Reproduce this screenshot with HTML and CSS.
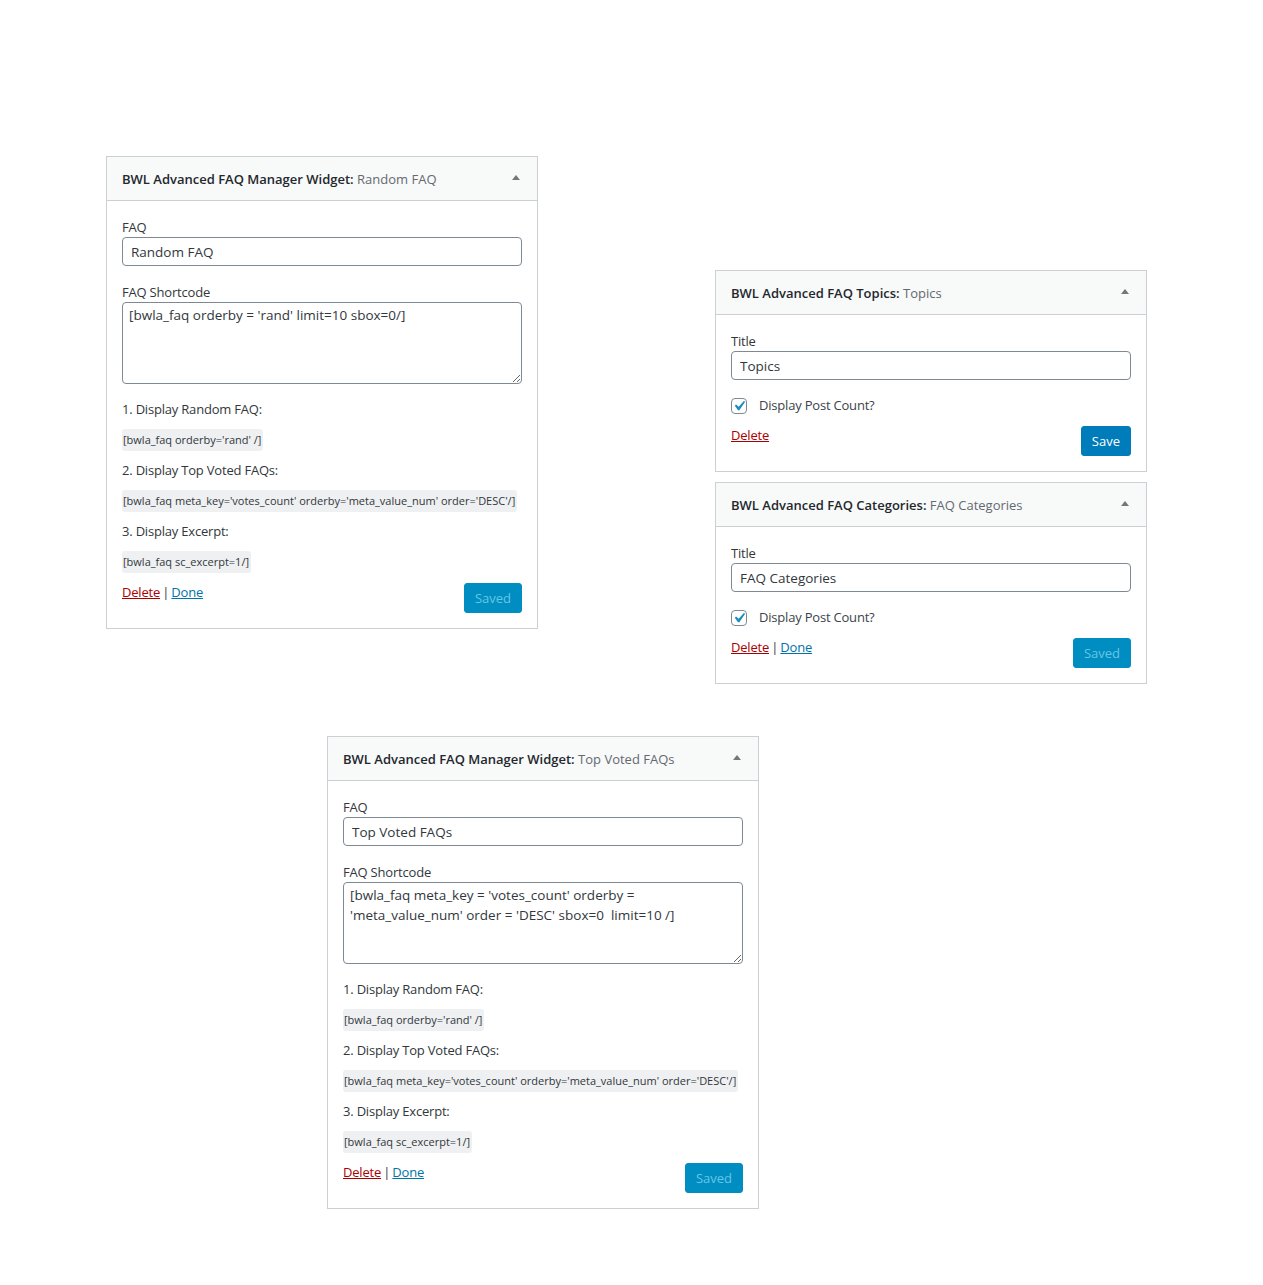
FILE: index.html
```html
<!DOCTYPE html>
<html lang="en">
<head>
  <meta charset="UTF-8">
  <meta name="viewport" content="width=device-width, initial-scale=1.0">
  <title>BWL Advanced FAQ Widgets</title>
  <link rel="stylesheet" href="styles.css">
</head>
<body>
  <main class="canvas">
    <div class="row-top">
      <section class="widget widget-random">
        <div class="widget-top">
          <h3>BWL Advanced FAQ Manager Widget:<span class="in-title"> Random FAQ</span></h3>
          <span class="toggle"></span>
        </div>
        <div class="widget-inside">
          <div class="field">
            <label>FAQ</label>
            <input type="text" class="widefat" value="Random FAQ">
          </div>
          <div class="field">
            <label>FAQ Shortcode</label>
            <textarea class="widefat">[bwla_faq orderby = 'rand' limit=10 sbox=0/]</textarea>
          </div>
          <div class="help">
            <p>1. Display Random FAQ:</p>
            <code>[bwla_faq orderby='rand' /]</code>
            <p>2. Display Top Voted FAQs:</p>
            <code>[bwla_faq meta_key='votes_count' orderby='meta_value_num' order='DESC'/]</code>
            <p>3. Display Excerpt:</p>
            <code>[bwla_faq sc_excerpt=1/]</code>
          </div>
          <div class="actions">
            <div class="links"><a href="#" class="delete">Delete</a> | <a href="#" class="done">Done</a></div>
            <button class="button saved">Saved</button>
          </div>
        </div>
      </section>

      <div class="side">
        <section class="widget">
          <div class="widget-top">
            <h3>BWL Advanced FAQ Topics:<span class="in-title"> Topics</span></h3>
            <span class="toggle"></span>
          </div>
          <div class="widget-inside">
            <div class="field">
              <label>Title</label>
              <input type="text" class="widefat" value="Topics">
            </div>
            <label class="check">
              <span class="box"><svg viewBox="0 0 20 20" width="20" height="20"><path d="M14.83 4.89l1.34.94-5.81 8.38H9.02L5.78 9.67l1.34-1.25 2.57 2.4z" fill="#1e8cbe"/></svg></span>
              <span>Display Post Count?</span>
            </label>
            <div class="actions">
              <div class="links"><a href="#" class="delete">Delete</a></div>
              <button class="button primary">Save</button>
            </div>
          </div>
        </section>

        <section class="widget">
          <div class="widget-top">
            <h3>BWL Advanced FAQ Categories:<span class="in-title"> FAQ Categories</span></h3>
            <span class="toggle"></span>
          </div>
          <div class="widget-inside">
            <div class="field">
              <label>Title</label>
              <input type="text" class="widefat" value="FAQ Categories">
            </div>
            <label class="check">
              <span class="box"><svg viewBox="0 0 20 20" width="20" height="20"><path d="M14.83 4.89l1.34.94-5.81 8.38H9.02L5.78 9.67l1.34-1.25 2.57 2.4z" fill="#1e8cbe"/></svg></span>
              <span>Display Post Count?</span>
            </label>
            <div class="actions">
              <div class="links"><a href="#" class="delete">Delete</a> | <a href="#" class="done">Done</a></div>
              <button class="button saved">Saved</button>
            </div>
          </div>
        </section>
      </div>
    </div>

    <div class="row-bottom">
      <section class="widget">
        <div class="widget-top">
          <h3>BWL Advanced FAQ Manager Widget:<span class="in-title"> Top Voted FAQs</span></h3>
          <span class="toggle"></span>
        </div>
        <div class="widget-inside">
          <div class="field">
            <label>FAQ</label>
            <input type="text" class="widefat" value="Top Voted FAQs">
          </div>
          <div class="field">
            <label>FAQ Shortcode</label>
            <textarea class="widefat">[bwla_faq meta_key = 'votes_count' orderby = 'meta_value_num' order = 'DESC' sbox=0  limit=10 /]</textarea>
          </div>
          <div class="help">
            <p>1. Display Random FAQ:</p>
            <code>[bwla_faq orderby='rand' /]</code>
            <p>2. Display Top Voted FAQs:</p>
            <code>[bwla_faq meta_key='votes_count' orderby='meta_value_num' order='DESC'/]</code>
            <p>3. Display Excerpt:</p>
            <code>[bwla_faq sc_excerpt=1/]</code>
          </div>
          <div class="actions">
            <div class="links"><a href="#" class="delete">Delete</a> | <a href="#" class="done">Done</a></div>
            <button class="button saved">Saved</button>
          </div>
        </div>
      </section>
    </div>
  </main>
</body>
</html>
```

FILE: styles.css
```css
body {
  margin: 0;
  background: #fff;
  color: #32373c;
  font-family: 'Open Sans', sans-serif;
  font-size: 13px;
  letter-spacing: -0.2px;
}

.canvas {
  padding: 156px 0 76px;
}

.row-top {
  display: flex;
  align-items: flex-start;
}

.row-top .widget-random {
  margin-left: 106px;
}

.side {
  display: flex;
  flex-direction: column;
  gap: 10px;
  margin: 114px 0 0 177px;
}

.row-bottom {
  margin: 52px 0 0 327px;
}

/* Widget box */
.widget {
  width: 430px;
  border: 1px solid #ccd0d4;
  background: #fff;
}

.widget-top {
  display: flex;
  justify-content: space-between;
  align-items: center;
  box-sizing: border-box;
  height: 44px;
  padding: 1px 17px 0 15px;
  background: #f8f9f9;
  border-bottom: 1px solid #ccd0d4;
}

.widget-top h3 {
  margin: 0;
  font-size: 13px;
  font-weight: 600;
  color: #23282d;
  line-height: 1;
  letter-spacing: 0;
}

.in-title {
  font-weight: 400;
  color: #646970;
}

.toggle {
  width: 0;
  height: 0;
  border-left: 4px solid transparent;
  border-right: 4px solid transparent;
  border-bottom: 5px solid #72777c;
  margin-top: -3px;
}

.widget-inside {
  padding: 0 15px 15px;
}

/* Form fields */
.field {
  margin-top: 17px;
}

.field label {
  display: block;
  line-height: 19px;
}

.widefat {
  display: block;
  width: 100%;
  box-sizing: border-box;
  margin: 0;
  border: 1px solid #7e8993;
  border-radius: 4px;
  background: #fff;
  color: #32373c;
  font-family: 'Open Sans', sans-serif;
  font-size: 13.5px;
  letter-spacing: 0;
}

input.widefat {
  height: 29px;
  padding: 0 8px;
}

textarea.widefat {
  height: 82px;
  padding: 2px 6px;
  line-height: 20px;
  resize: vertical;
}

.help {
  margin-top: 16px;
}

.help p {
  margin: 0 0 10px;
  line-height: 19px;
}

.help code {
  display: inline-block;
  height: 22px;
  line-height: 22px;
  margin-bottom: 10px;
  padding: 0 2px 0 1px;
  border-radius: 3px;
  background: #eef0f1;
  color: #32373c;
  font-family: 'Open Sans', sans-serif;
  font-size: 11px;
  letter-spacing: 0;
}

.check {
  display: flex;
  align-items: center;
  gap: 12px;
  height: 16px;
  margin-top: 18px;
  color: #3c434a;
}

.check .box {
  display: flex;
  align-items: center;
  justify-content: center;
  width: 14px;
  height: 14px;
  border: 1px solid #7e8993;
  border-radius: 4px;
  overflow: hidden;
}

.check .box svg {
  flex: none;
  margin: 0 0 0 -1px;
}

.check span:last-child {
  margin-bottom: 3px;
}

.actions {
  display: flex;
  justify-content: space-between;
  align-items: flex-start;
  margin-top: 12px;
}

.help + .actions {
  margin-top: 0;
}

.links {
  line-height: 19px;
  word-spacing: -1px;
}

.delete {
  color: #a00;
}

.done {
  color: #0073aa;
}

.button {
  height: 30px;
  padding: 0 10px;
  border: 1px solid;
  border-radius: 3px;
  font-family: 'Open Sans', sans-serif;
  font-size: 13px;
  line-height: 28px;
}

.button.primary {
  background: #007cba;
  border-color: #007cba;
  color: #fff;
}

.button.saved {
  background: #008ec2;
  border-color: #008ec2;
  color: #66c6e4;
}
```
